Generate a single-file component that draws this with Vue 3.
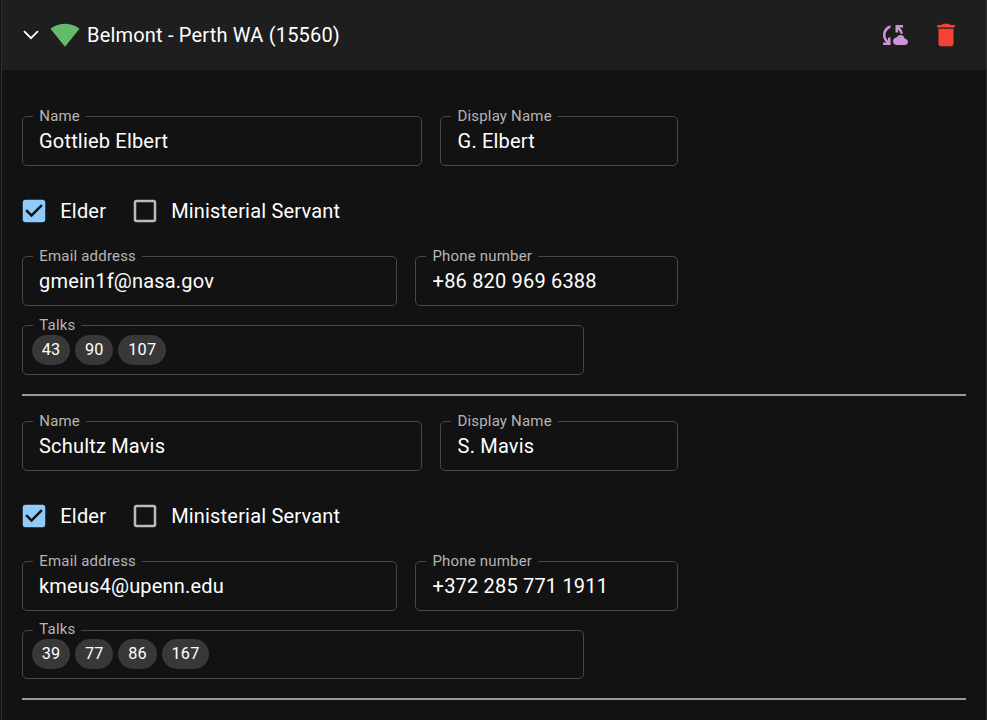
<script setup>
const speakers = [
  {
    name: 'Gottlieb Elbert',
    display: 'G. Elbert',
    email: 'gmein1f@nasa.gov',
    phone: '+86 820 969 6388',
    talks: [43, 90, 107],
  },
  {
    name: 'Schultz Mavis',
    display: 'S. Mavis',
    email: 'kmeus4@upenn.edu',
    phone: '+372 285 771 1911',
    talks: [39, 77, 86, 167],
  },
]
</script>

<template>
  <main class="panel">
    <header class="header">
      <svg class="icon chevron" viewBox="0 0 24 24"><path d="M6.8 9.3 12 14.5l5.2-5.2" /></svg>
      <svg class="icon signal" viewBox="0 0 24 24"><path d="M12.01 21.49 23.64 7c-.45-.34-4.93-4-11.64-4C5.28 3 .81 6.66.36 7l11.63 14.49.01.01.01-.01z" /></svg>
      <span class="title">Belmont - Perth WA (15560)</span>
      <svg class="icon sync" viewBox="0 0 24 24"><path d="M21.5 14.98c-.02 0-.03 0-.05.01C21.2 13.3 19.76 12 18 12c-1.4 0-2.6.83-3.16 2.02C13.26 14.1 12 15.4 12 17c0 1.66 1.34 3 3 3l6.5-.02c1.38 0 2.5-1.12 2.5-2.5s-1.12-2.5-2.5-2.5zM10 4.26v2.09C7.67 7.18 6 9.39 6 12c0 1.77.78 3.34 2 4.44V14h2v6H4v-2h2.73C5.06 16.54 4 14.4 4 12c0-3.73 2.55-6.85 6-7.74zM20 6h-2.73c1.43 1.26 2.41 3.01 2.66 5h-2.02c-.23-1.36-.93-2.55-1.91-3.44V10h-2V4h6v2z" /></svg>
      <svg class="icon trash" viewBox="0 0 24 24"><path d="M6 19c0 1.1.9 2 2 2h8c1.1 0 2-.9 2-2V7H6v12zM19 4h-3.5l-1-1h-5l-1 1H5v2h14V4z" /></svg>
    </header>

    <section v-for="s in speakers" :key="s.email" class="speaker">
      <div class="row">
        <fieldset class="field name"><legend>Name</legend><div class="value">{{ s.name }}</div></fieldset>
        <fieldset class="field display"><legend>Display Name</legend><div class="value">{{ s.display }}</div></fieldset>
      </div>
      <div class="checks">
        <svg class="icon checked" viewBox="0 0 24 24"><path d="M19 3H5c-1.11 0-2 .9-2 2v14c0 1.1.89 2 2 2h14c1.11 0 2-.9 2-2V5c0-1.1-.89-2-2-2zm-9 14l-5-5 1.41-1.41L10 14.17l7.59-7.59L19 8l-9 9z" /></svg>
        <span class="elder">Elder</span>
        <svg class="icon unchecked" viewBox="0 0 24 24"><path d="M19 5v14H5V5h14m0-2H5c-1.1 0-2 .9-2 2v14c0 1.1.9 2 2 2h14c1.1 0 2-.9 2-2V5c0-1.1-.9-2-2-2z" /></svg>
        <span class="servant">Ministerial Servant</span>
      </div>
      <div class="row">
        <fieldset class="field email"><legend>Email address</legend><div class="value">{{ s.email }}</div></fieldset>
        <fieldset class="field phone"><legend>Phone number</legend><div class="value">{{ s.phone }}</div></fieldset>
      </div>
      <fieldset class="field talks">
        <legend>Talks</legend>
        <div class="chips"><span v-for="t in s.talks" :key="t" class="chip">{{ t }}</span></div>
      </fieldset>
      <div class="divider"></div>
    </section>
  </main>
</template>

<style>
body {
  background: #121212;
}
</style>

<style scoped>
.panel {
  box-sizing: border-box;
  height: 720px;
  margin-left: 1px;
  overflow: hidden;
  border: solid #2e2e2e;
  border-width: 0 1px;
  background: #121212;
  color: #fff;
  font-family: Roboto, sans-serif;
  font-size: 20px;
  letter-spacing: 0.00938em;
}
.header {
  display: flex;
  align-items: center;
  box-sizing: border-box;
  height: 70px;
  padding: 0 25px 0 14px;
  margin-bottom: 38px;
  background: #1e1e1e;
}
.icon {
  flex: none;
  width: 30px;
  height: 30px;
}
.chevron {
  fill: none;
  stroke: #fff;
  stroke-width: 1.5;
  stroke-linecap: round;
}
.signal {
  margin-left: 4.4px;
  fill: #66bb6a;
}
.title {
  margin-left: 6.6px;
  line-height: 30px;
}
.sync {
  margin-left: auto;
  fill: #ce93d8;
}
.trash {
  margin-left: 23px;
  fill: #f44336;
}
.speaker {
  padding: 0 20px;
  margin-bottom: 17px;
}
.row {
  display: flex;
  gap: 18px;
}
.field {
  box-sizing: border-box;
  height: 58px;
  min-width: 0;
  margin: 0;
  padding: 0 10px;
  border: 1px solid #484848;
  border-radius: 5px;
}
legend {
  height: 17px;
  padding: 0 5.7px 0 6.3px;
  color: #b5b5b5;
  font-size: 15px;
  line-height: 17px;
}
.value {
  padding: 2px 6px 0;
  line-height: 29px;
  white-space: nowrap;
}
.name {
  width: 400px;
}
.display {
  width: 238px;
}
.email {
  width: 375px;
}
.phone {
  width: 263px;
}
.display .value,
.phone .value {
  padding-left: 6.6px;
}
.display legend,
.phone legend {
  padding: 0 6px 0 6.4px;
}
.talks {
  width: 562px;
  margin-top: 11px;
}
.checks {
  display: flex;
  align-items: center;
  height: 30px;
  padding: 30px 0 22px;
  margin-left: -3px;
  line-height: 30px;
}
.checked {
  fill: #90caf9;
}
.unchecked {
  margin-left: 23.7px;
  fill: #bbb;
}
.elder,
.servant {
  margin-left: 11.3px;
}
.chips {
  display: flex;
  gap: 5px;
  padding-top: 1px;
  margin-left: -1px;
}
.chip {
  height: 30px;
  padding: 0 9.8px;
  border-radius: 15px;
  background: #383838;
  font-size: 16.25px;
  line-height: 30px;
}
.divider {
  height: 2px;
  margin-top: 19px;
  background: #999;
}
.speaker:last-child .talks {
  height: 57px;
}
.speaker:last-child .talks legend {
  line-height: 15px;
}
.speaker:last-child .chips {
  padding-top: 0;
}
</style>
